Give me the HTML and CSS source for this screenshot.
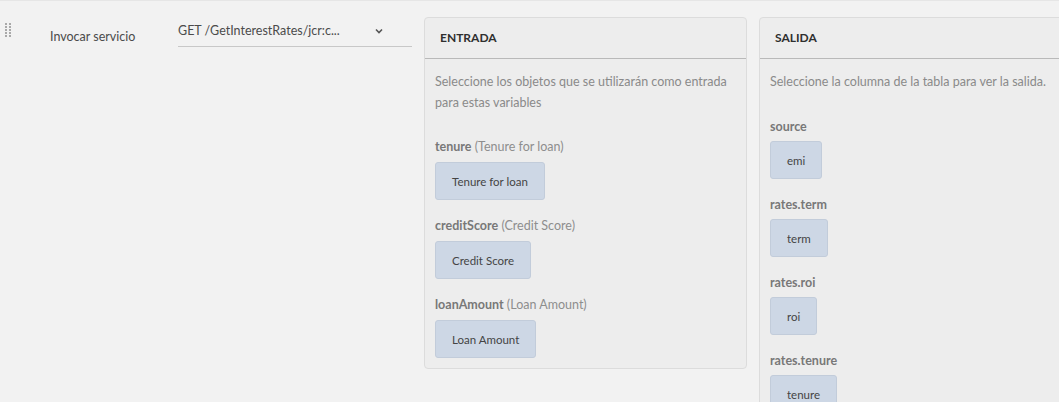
FILE: index.html
```html
<!DOCTYPE html>
<html lang="es">
<head>
<meta charset="utf-8">
<title>Invocar servicio</title>
<link rel="stylesheet" href="styles.css">
</head>
<body>
<div class="page">
  <div class="handle">
    <svg width="6" height="15" viewBox="0 0 6 15">
      <g fill="#a9a9a9">
        <rect x="0" y="0" width="2" height="2"/><rect x="4" y="0" width="2" height="2"/>
        <rect x="0" y="3" width="2" height="2"/><rect x="4" y="3" width="2" height="2"/>
        <rect x="0" y="6" width="2" height="2"/><rect x="4" y="6" width="2" height="2"/>
        <rect x="0" y="9" width="2" height="2"/><rect x="4" y="9" width="2" height="2"/>
        <rect x="0" y="12" width="2" height="2"/><rect x="4" y="12" width="2" height="2"/>
      </g>
    </svg>
  </div>
  <div class="field-label">Invocar servicio</div>
  <div class="select">
    <span class="select-value">GET /GetInterestRates/jcr:c...</span>
    <svg class="chevron" width="8" height="6" viewBox="0 0 8 6"><path d="M1 1.5 L4 4.5 L7 1.5" fill="none" stroke="#555" stroke-width="1.6"/></svg>
  </div>
  <div class="panels">
    <section class="panel panel-in">
      <header class="panel-head">ENTRADA</header>
      <div class="panel-body">
        <p class="desc">Seleccione los objetos que se utilizarán como entrada para estas variables</p>
        <div class="items">
          <div class="item">
            <div class="item-label"><b>tenure</b> (Tenure for loan)</div>
            <button class="chip">Tenure for loan</button>
          </div>
          <div class="item">
            <div class="item-label"><b>creditScore</b> (Credit Score)</div>
            <button class="chip">Credit Score</button>
          </div>
          <div class="item">
            <div class="item-label"><b>loanAmount</b> (Loan Amount)</div>
            <button class="chip">Loan Amount</button>
          </div>
        </div>
      </div>
    </section>
    <section class="panel panel-out">
      <header class="panel-head">SALIDA</header>
      <div class="panel-body">
        <p class="desc">Seleccione la columna de la tabla para ver la salida.</p>
        <div class="items">
          <div class="item">
            <div class="item-label"><b>source</b></div>
            <button class="chip">emi</button>
          </div>
          <div class="item">
            <div class="item-label"><b>rates.term</b></div>
            <button class="chip">term</button>
          </div>
          <div class="item">
            <div class="item-label"><b>rates.roi</b></div>
            <button class="chip">roi</button>
          </div>
          <div class="item">
            <div class="item-label"><b>rates.tenure</b></div>
            <button class="chip">tenure</button>
          </div>
        </div>
      </div>
    </section>
  </div>
</div>
</body>
</html>
```

FILE: styles.css
```css
html, body {
  margin: 0;
  padding: 0;
  background: #f2f2f2;
  overflow: hidden;
}
body {
  font-family: Lato, "Open Sans", sans-serif;
  font-size: 12.5px;
  color: #4b4b4b;
  border-top: 1px solid #e6e6e6;
}
.page {
  display: flex;
  align-items: flex-start;
  padding-top: 16px;
  width: 1059px;
  height: 385px;
  overflow: hidden;
}
.handle {
  margin-left: 5px;
  margin-top: 6px;
  line-height: 0;
}
.field-label {
  margin-left: 39px;
  margin-top: 10px;
  line-height: 20px;
  width: 128px;
  flex-shrink: 0;
}
.select {
  width: 234px;
  flex-shrink: 0;
  height: 30px;
  border-bottom: 1px solid #c8c8c8;
  display: flex;
  align-items: center;
  justify-content: space-between;
  box-sizing: border-box;
  padding-right: 29px;
  margin-right: 12px;
}
.select-value {
  line-height: 28px;
  margin-top: -1px;
}
.chevron {
  margin-top: -2px;
}
.panels {
  display: flex;
  gap: 12px;
  align-items: flex-start;
  flex-shrink: 0;
}
.panel {
  background: #ededed;
  border: 1px solid #dcdcdc;
  border-radius: 4px;
  flex-shrink: 0;
}
.panel-in { width: 321px; }
.panel-out { width: 330px; }
.panel-head {
  height: 40px;
  line-height: 40px;
  padding-left: 15px;
  font-weight: bold;
  font-size: 12px;
  color: #2f2f2f;
  border-bottom: 1px solid #b9b9b9;
}
.panel-body {
  padding: 12px 10px 10px;
}
.desc {
  margin: 0;
  line-height: 21px;
  color: #8a8a8a;
}
.items {
  display: flex;
  flex-direction: column;
  gap: 16px;
  margin-top: 24px;
}
.panel-out .items { margin-top: 25px; }
.item {
  display: flex;
  flex-direction: column;
  align-items: flex-start;
  gap: 5px;
}
.panel-out .item { gap: 4px; }
.item-label {
  line-height: 20px;
  color: #8e8e8e;
}
.item-label b {
  color: #787878;
}
.chip {
  height: 38px;
  padding: 0 16px;
  background: #cdd7e5;
  border: 1px solid #c2ccda;
  border-radius: 3px;
  font-family: inherit;
  font-size: 11.5px;
  color: #444;
}
```
